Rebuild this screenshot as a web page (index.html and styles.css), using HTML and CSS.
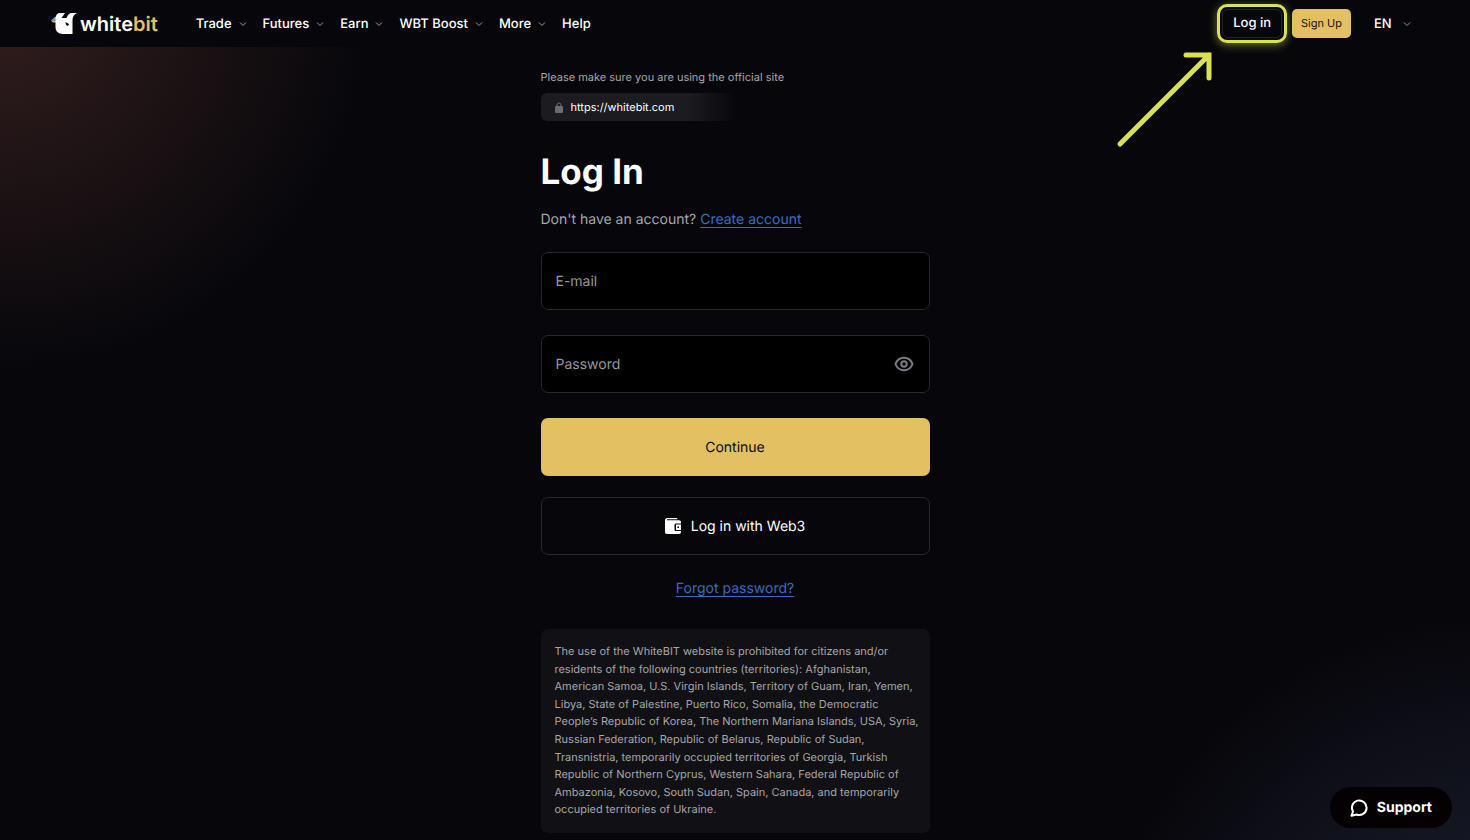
FILE: index.html
```html
<!DOCTYPE html>
<html lang="en">
<head>
    <meta charset="utf-8">
    <meta name="viewport" content="width=device-width, initial-scale=1">
    <title>Log In | WhiteBIT</title>
    <link rel="stylesheet" href="styles.css">
</head>
<body>
    <header class="header">
        <a class="logo" href="#">
            <svg class="logo-mark" width="26" height="22" viewBox="0 0 26 22" aria-hidden="true">
                <path d="M0 7.500 L3.500 4 H7 V7.500 Z" fill="#4a9fe0"/>
                <path d="M0 7.500 H6 V9.500 H2 Z" fill="#e9b63f"/>
                <path d="M4.500 6 C4.500 2.500 6 0 9 0 H14 L10.500 5 H15.500 C16.500 2 18 0 21 0 H26 C23 1.500 21.500 3.500 21.500 7 V21 H12 C7 21 4.500 18 4.500 14 Z" fill="#fff"/>
                <path d="M14.500 9 L18 11 L17 13 L15 12 Z" fill="#07070b"/>
            </svg>
            <span class="logo-text">white<span class="gold">bit</span></span>
        </a>
        <nav class="nav">
            <a href="#">Trade <svg class="chevron" viewBox="0 0 8 8"><path d="M1 2.500 L4 5.500 L7 2.500"/></svg></a>
            <a href="#">Futures <svg class="chevron" viewBox="0 0 8 8"><path d="M1 2.500 L4 5.500 L7 2.500"/></svg></a>
            <a href="#">Earn <svg class="chevron" viewBox="0 0 8 8"><path d="M1 2.500 L4 5.500 L7 2.500"/></svg></a>
            <a href="#">WBT Boost <svg class="chevron" viewBox="0 0 8 8"><path d="M1 2.500 L4 5.500 L7 2.500"/></svg></a>
            <a href="#">More <svg class="chevron" viewBox="0 0 8 8"><path d="M1 2.500 L4 5.500 L7 2.500"/></svg></a>
            <a href="#">Help</a>
        </nav>
        <div class="actions">
            <div class="login-wrap">
                <a class="btn-login" href="#">Log in</a>
                <svg class="arrow" width="98" height="98" viewBox="0 0 98 98" aria-hidden="true">
                    <path d="M4 94 L93 5 M70 5 H93 V28"/>
                </svg>
            </div>
            <a class="btn-signup" href="#">Sign Up</a>
            <div class="lang">
                <select aria-label="Language">
                    <option>EN</option>
                </select>
                <svg class="chevron" viewBox="0 0 8 8"><path d="M1 2.500 L4 5.500 L7 2.500"/></svg>
            </div>
        </div>
    </header>

    <main class="main">
        <div class="content">
            <p class="note">Please make sure you are using the official site</p>
            <div class="site-url">
                <svg width="8" height="11" viewBox="0 0 8 11" aria-hidden="true">
                    <path d="M2 5 V3 A2 2 0 0 1 6 3 V5" fill="none" stroke="#6b6b70" stroke-width="1"/>
                    <rect x="0" y="4" width="8" height="7" rx="1" fill="#6b6b70"/>
                </svg>
                <span>https://whitebit.com</span>
            </div>

            <h1>Log In</h1>
            <p class="signup-hint">Don't have an account? <a class="link" href="#">Create account</a></p>

            <form class="login-form">
                <div class="field">
                    <input type="email" id="email" placeholder="E-mail" aria-label="E-mail">
                </div>
                <div class="field">
                    <input type="password" id="password" placeholder="Password" aria-label="Password">
                    <button type="button" class="eye" aria-label="Show password">
                        <svg width="20" height="16" viewBox="0 0 20 16" fill="none" stroke="#7d7b86" stroke-width="2">
                            <path d="M1.500 8 C3 4 6 1.700 10 1.700 C14 1.700 17 4 18.500 8 C17 12 14 14.300 10 14.300 C6 14.300 3 12 1.500 8 Z"/>
                            <circle cx="10" cy="8" r="2.700"/>
                        </svg>
                    </button>
                </div>
                <button type="submit" class="btn btn-primary">Continue</button>
                <button type="button" class="btn btn-outline">
                    <svg width="16" height="16" viewBox="0 0 16 16" aria-hidden="true">
                        <path d="M0 2 C0 1 1 0 2 0 H11 C12 0 12.500 .5 12.500 1.300 H2 V2.300 H14 C15.300 2.300 16 3 16 4.300 V5.500 H11 C10 5.500 9.500 6 9.500 7 V11.500 C9.500 12.500 10 13 11 13 H16 V14 C16 15.300 15.300 16 14 16 H2 C.700 16 0 15.300 0 14 Z" fill="#fff"/>
                        <path d="M11 6.500 H16 V12 H11 Z M12.500 8.500 V10 H14 V8.500 Z" fill="#fff" fill-rule="evenodd"/>
                    </svg>
                    Log in with Web3
                </button>
            </form>
            <p class="forgot"><a class="link" href="#">Forgot password?</a></p>

            <p class="disclaimer">The use of the WhiteBIT website is prohibited for citizens and/or residents of the following countries (territories): Afghanistan, American&nbsp;Samoa, U.S. Virgin Islands, Territory of Guam, Iran, Yemen, Libya, State of Palestine, Puerto Rico, Somalia, the Democratic People’s Republic of Korea, The Northern Mariana Islands, USA, Syria, Russian Federation, Republic of Belarus, Republic of Sudan, Transnistria, temporarily occupied territories of Georgia, Turkish Republic of Northern Cyprus, Western Sahara, Federal Republic of Ambazonia, Kosovo, South Sudan, Spain, Canada, and temporarily occupied territories of Ukraine.</p>
        </div>
    </main>

    <button type="button" class="support">
        <svg width="18" height="18" viewBox="0 0 18 18" fill="none" stroke="#fff" stroke-width="2" aria-hidden="true">
            <path d="M3 12.500 A7.300 7.300 0 1 1 6.500 15.500 L1.500 16.800 Z" stroke-linejoin="round"/>
        </svg>
        Support
    </button>
</body>
</html>
```
FILE: styles.css
```css
* {
    box-sizing: border-box;
}

body {
    margin: 0;
    min-height: 100vh;
    font-family: Inter, "Liberation Sans", sans-serif;
    text-rendering: geometricPrecision;
    color: #fff;
    background-color: #07070b;
    background-image:
        radial-gradient(circle 370px at 0 0, #331e1e, rgba(7, 7, 11, 0)),
        radial-gradient(circle 400px at calc(100% + 25px) calc(100% + 175px), #1e2236, rgba(7, 7, 11, 0));
    background-repeat: no-repeat;
}

a {
    color: inherit;
    text-decoration: none;
}

p, h1 {
    margin: 0;
}

button, input, select {
    font-family: inherit;
    text-rendering: inherit;
}

/* header */
.header {
    display: flex;
    align-items: center;
    height: 47px;
    padding: 0 59px 0 51px;
    background-color: #07070b;
    font-size: 13px;
    font-weight: 500;
}

.logo {
    display: flex;
    align-items: center;
    gap: 3px;
    margin-right: 38px;
}

.logo-text {
    font-size: 20px;
    font-weight: 600;
    line-height: 22px;
}

.gold {
    color: #e3c062;
}

.nav {
    display: flex;
    gap: 16px;
}

.nav a {
    display: flex;
    align-items: center;
    gap: 7px;
}

.chevron {
    width: 8px;
    height: 8px;
    fill: none;
    stroke: #9a9a9e;
    stroke-width: 1;
}

.actions {
    display: flex;
    align-items: center;
    margin-left: auto;
}

.login-wrap {
    position: relative;
    margin-right: 10px;
}

.btn-login {
    display: block;
    padding: 0 10px;
    border: 1px solid #242428;
    border-radius: 6px;
    line-height: 27px;
}

/* highlight round the login button */
.login-wrap::after {
    content: "";
    position: absolute;
    inset: -5px;
    border: 3px solid #d8e254;
    border-radius: 10px;
    box-shadow: 0 2px 8px rgba(216, 226, 84, 0.5);
    pointer-events: none;
}

.arrow {
    position: absolute;
    top: 41px;
    right: 68px;
    fill: none;
    stroke: #d8e254;
    stroke-width: 5;
    stroke-linecap: round;
    stroke-linejoin: miter;
    pointer-events: none;
}

.btn-signup {
    padding: 0 9px;
    border-radius: 5px;
    background-color: #e3c062;
    color: #17140a;
    font-size: 11px;
    font-weight: 400;
    line-height: 29px;
}

.lang {
    display: flex;
    align-items: center;
    gap: 11px;
    margin-left: 23px;
}

.lang select {
    appearance: none;
    padding: 0;
    border: none;
    background: none;
    color: #fff;
    font-size: 13px;
    font-weight: 500;
}

/* login form */
.main {
    padding: 21px 16px 8px;
}

.content {
    max-width: 389px;
    margin: 0 auto;
}

.note {
    color: #a6a6a9;
    font-size: 11px;
    line-height: 18px;
}

.site-url {
    display: flex;
    align-items: center;
    gap: 8px;
    width: 196px;
    height: 28px;
    margin-top: 7px;
    padding-left: 14px;
    border-radius: 6px;
    background: linear-gradient(to right, #1c1c20 75%, rgba(28, 28, 32, 0));
    font-size: 11px;
}

h1 {
    margin-top: 30px;
    font-size: 35px;
    font-weight: 700;
    line-height: 42px;
}

.signup-hint {
    margin-top: 17px;
    color: #a6a6a9;
    font-size: 14px;
    line-height: 20px;
}

.link {
    color: #3a6bc0;
    text-decoration: underline;
    text-decoration-thickness: 1px;
    text-underline-offset: 3px;
}

.login-form {
    display: flex;
    flex-direction: column;
    margin-top: 22px;
}

.field {
    position: relative;
    margin-bottom: 25px;
}

.field input {
    display: block;
    width: 100%;
    height: 58px;
    padding: 0 14px;
    border: 1px solid #28282c;
    border-radius: 7px;
    background-color: #000;
    color: #fff;
    font-size: 14px;
}

.field input::placeholder {
    color: #98989c;
}

.eye {
    display: flex;
    align-items: center;
    position: absolute;
    top: 0;
    right: 16px;
    height: 100%;
    padding: 0;
    border: none;
    background: none;
}

.btn {
    display: flex;
    align-items: center;
    justify-content: center;
    gap: 10px;
    height: 58px;
    border: none;
    border-radius: 7px;
    font-size: 14px;
}

.btn-primary {
    background-color: #e3c062;
    color: #0d0c08;
}

.btn-outline {
    margin-top: 21px;
    border: 1px solid #28282c;
    background: none;
    color: #fff;
}

.forgot {
    margin-top: 24px;
    font-size: 14px;
    line-height: 20px;
    text-align: center;
}

.disclaimer {
    margin-top: 30px;
    padding: 14px 8px 14px 14px;
    border-radius: 7px;
    background-color: #111115;
    color: #a6a6a9;
    font-size: 11px;
    line-height: 1.6;
}

/* support widget */
.support {
    position: fixed;
    right: 18px;
    bottom: 12px;
    display: flex;
    align-items: center;
    gap: 9px;
    height: 41px;
    padding: 0 20px;
    border: none;
    border-radius: 21px;
    background-color: #050001;
    color: #fff;
    font-size: 14px;
    font-weight: 700;
}
```
